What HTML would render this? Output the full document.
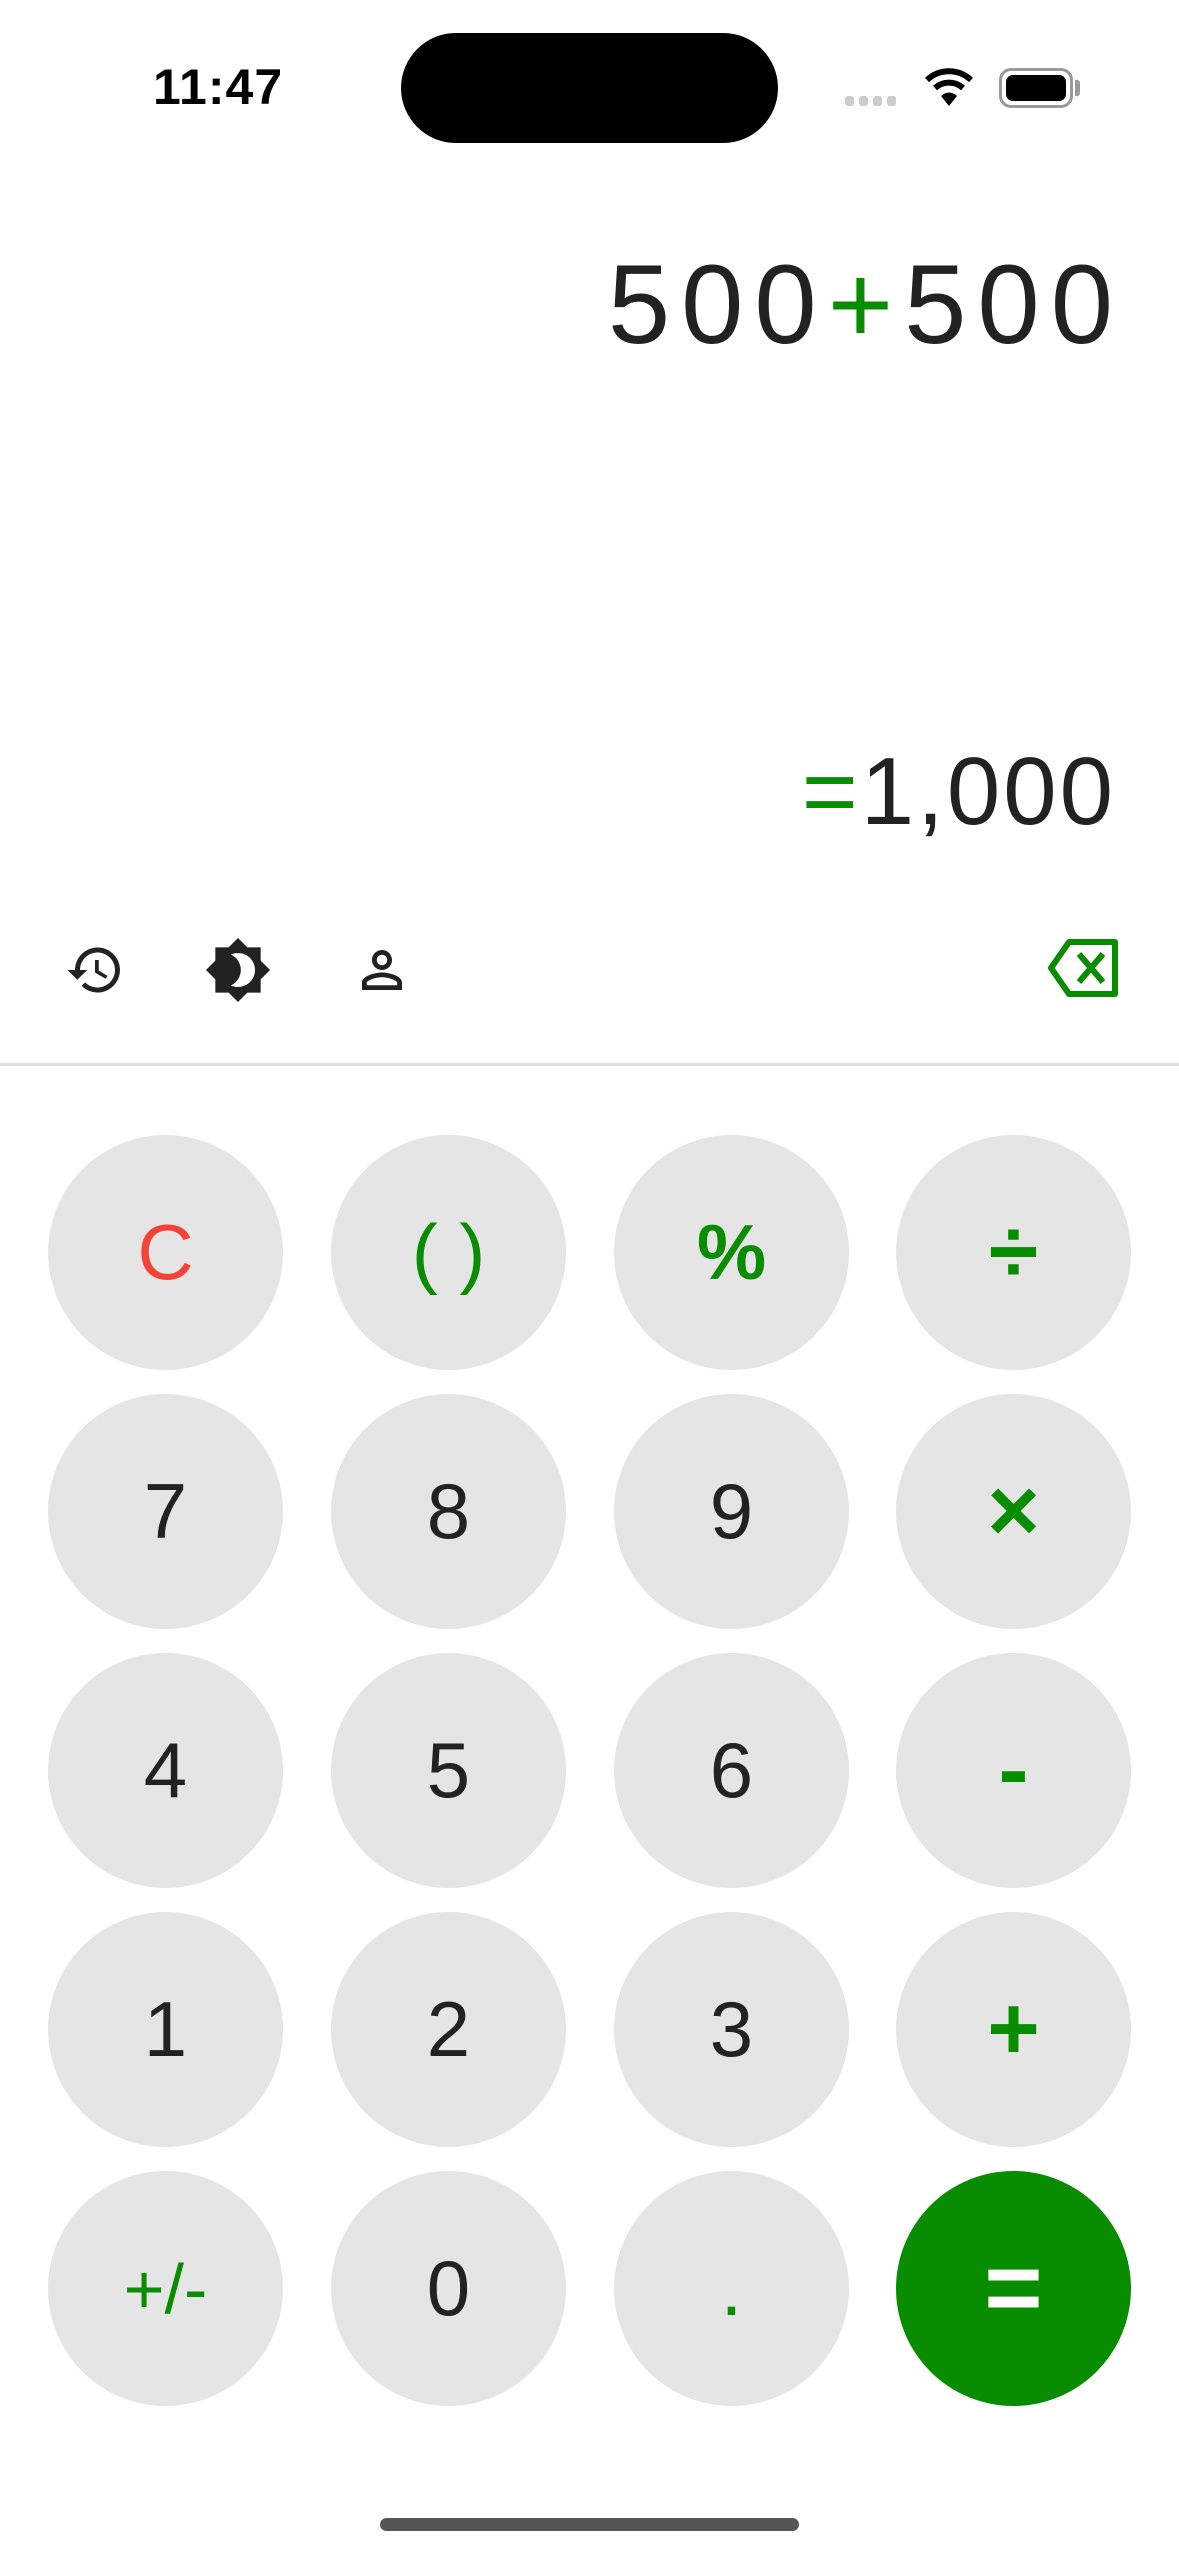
<!DOCTYPE html>
<html><head><meta charset="utf-8"><style>
*{margin:0;padding:0;box-sizing:border-box}
body{width:1179px;height:2556px;background:#fff;position:relative;overflow:hidden;font-family:"Liberation Sans",sans-serif;color:#222}
.abs{position:absolute}
.btn{position:absolute;width:235px;height:235px;border-radius:50%;background:#e5e5e5;display:flex;align-items:center;justify-content:center;font-size:78px;color:#222}
.g{color:#088c00}
.b{font-weight:bold}
</style></head><body>
<div class="abs" style="left:153px;top:58px;font-size:50px;font-weight:bold;color:#000;letter-spacing:1px">11:47</div>
<div class="abs" style="left:401px;top:33px;width:377px;height:110px;border-radius:55px;background:#000"></div>
<div class="abs" style="left:845px;top:96px;display:flex;gap:5px">
<div style="width:9px;height:10px;border-radius:3px;background:#ccc"></div><div style="width:9px;height:10px;border-radius:3px;background:#ccc"></div><div style="width:9px;height:10px;border-radius:3px;background:#ccc"></div><div style="width:9px;height:10px;border-radius:3px;background:#ccc"></div></div>
<svg class="abs" style="left:923px;top:66px" width="52" height="42" viewBox="0 0 52 42"><path d="M4 14 A32 32 0 0 1 48 14" stroke="#000" stroke-width="6" fill="none"/><path d="M12 22 A21 21 0 0 1 40 22" stroke="#000" stroke-width="6" fill="none"/><path d="M26 40 L18 30 A11 11 0 0 1 34 30 Z" fill="#000"/></svg>
<div class="abs" style="left:999px;top:68px;width:74px;height:40px;border:3px solid #999;border-radius:12px;padding:4px"><div style="width:100%;height:100%;background:#000;border-radius:7px"></div></div>
<div class="abs" style="left:1075px;top:80px;width:5px;height:16px;background:#999;border-radius:0 3px 3px 0"></div>

<div class="abs" style="right:66px;top:230px;font-size:112px;line-height:150px;white-space:nowrap;letter-spacing:11px">500<span class="g">+</span>50<span style="letter-spacing:0">0</span></div>
<div class="abs" style="right:66px;top:732px;font-size:96px;line-height:120px;white-space:nowrap;letter-spacing:3px"><span class="g">=</span>1,00<span style="letter-spacing:0">0</span></div>

<svg class="abs" style="left:62px;top:940px" width="66" height="60" viewBox="0 0 24 24"><path d="M13 3a9 9 0 0 0-9 9H1l3.9 3.9L8.9 12H6a7 7 0 1 1 2.05 4.95l-1.42 1.42A9 9 0 1 0 13 3zm-1 5v5l4.28 2.54.72-1.21-3.5-2.08V8H12z" fill="#222"/></svg>
<svg class="abs" style="left:204px;top:936px" width="68" height="68" viewBox="0 0 24 24"><path d="M20 8.69V4h-4.69L12 .69 8.69 4H4v4.69L.69 12 4 15.31V20h4.69L12 23.31 15.31 20H20v-4.69L23.31 12 20 8.69zM12 18c-.89 0-1.74-.2-2.5-.55C11.56 16.5 13 14.42 13 12s-1.44-4.5-3.5-5.45A5.9 5.9 0 0 1 12 6c3.31 0 6 2.69 6 6s-2.69 6-6 6z" fill="#222"/></svg>
<svg class="abs" style="left:352px;top:940px" width="60" height="60" viewBox="0 0 24 24"><path d="M12 5.9a2.1 2.1 0 1 1 0 4.2 2.1 2.1 0 0 1 0-4.2m0 9c2.97 0 6.1 1.46 6.1 2.1v1.1H5.9V17c0-.64 3.13-2.1 6.1-2.1M12 4C9.79 4 8 5.79 8 8s1.79 4 4 4 4-1.79 4-4-1.79-4-4-4zm0 9c-2.67 0-8 1.34-8 4v3h16v-3c0-2.66-5.33-4-8-4z" fill="#222"/></svg>
<svg class="abs" style="left:1045px;top:938px" width="76" height="60" viewBox="0 0 38 30"><path d="M12 2 H35 V28 H12 L3 15 Z" fill="none" stroke="#088c00" stroke-width="3" stroke-linejoin="round"/><path d="M17 8 L29 22 M29 8 L17 22" stroke="#088c00" stroke-width="3"/></svg>

<div class="abs" style="left:0;top:1063px;width:1179px;height:3px;background:#e0e0e0"></div>

<div class="btn" style="left:48px;top:1135px;color:#f44336">C</div>
<div class="btn g" style="left:331px;top:1135px">( )</div>
<div class="btn g b" style="left:614px;top:1135px">%</div>
<div class="btn g b" style="left:896px;top:1135px;font-size:90px">÷</div>

<div class="btn" style="left:48px;top:1394px">7</div>
<div class="btn" style="left:331px;top:1394px">8</div>
<div class="btn" style="left:614px;top:1394px">9</div>
<div class="btn g b" style="left:896px;top:1394px;font-size:90px">×</div>

<div class="btn" style="left:48px;top:1653px">4</div>
<div class="btn" style="left:331px;top:1653px">5</div>
<div class="btn" style="left:614px;top:1653px">6</div>
<div class="btn g b" style="left:896px;top:1653px;font-size:90px">-</div>

<div class="btn" style="left:48px;top:1912px">1</div>
<div class="btn" style="left:331px;top:1912px">2</div>
<div class="btn" style="left:614px;top:1912px">3</div>
<div class="btn g b" style="left:896px;top:1912px;font-size:90px">+</div>

<div class="btn g" style="left:48px;top:2171px;font-size:70px">+/-</div>
<div class="btn" style="left:331px;top:2171px">0</div>
<div class="btn g" style="left:614px;top:2171px">.</div>
<div class="btn b" style="left:896px;top:2171px;background:#088c00;color:#fff;font-size:100px">=</div>

<div class="abs" style="left:380px;top:2518px;width:419px;height:13px;border-radius:7px;background:#555"></div>
</body></html>
